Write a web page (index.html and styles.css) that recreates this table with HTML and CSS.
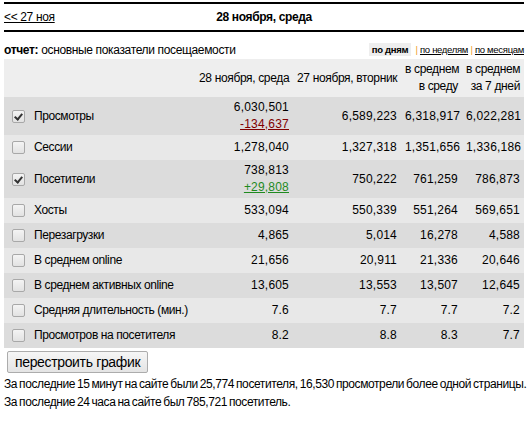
FILE: index.html
```html
<!DOCTYPE html>
<html lang="ru">
<head>
    <meta charset="UTF-8">
    <title>Основные показатели посещаемости</title>
    <link rel="stylesheet" href="styles.css">
</head>
<body>
    <div class="page">
        <div class="daybar">
            <a href="#" class="prev">&lt;&lt; 27 ноя</a>
            <span class="title">28 ноября, среда</span>
            <span class="next"></span>
        </div>

        <div class="report">
            <span><b>отчет:</b> основные показатели посещаемости</span>
            <span class="period">
                <b class="active">по дням</b>
                <span class="sep">|</span>
                <a href="#">по неделям</a>
                <span class="sep">|</span>
                <a href="#">по месяцам</a>
            </span>
        </div>

        <table class="stats">
            <colgroup>
                <col class="c-name">
                <col class="c-today">
                <col class="c-prev">
                <col class="c-wday">
                <col class="c-week">
            </colgroup>
            <tr class="head">
                <td></td>
                <td>28 ноября, среда</td>
                <td>27 ноября, вторник</td>
                <td>в среднем<br>в среду</td>
                <td>в среднем<br>за 7 дней</td>
            </tr>
            <tr class="dark tall">
                <td><label><span class="box checked"></span>Просмотры</label></td>
                <td>6,030,501<br><a href="#" class="down">-134,637</a></td>
                <td>6,589,223</td>
                <td>6,318,917</td>
                <td>6,022,281</td>
            </tr>
            <tr class="light">
                <td><label><span class="box"></span>Сессии</label></td>
                <td>1,278,040</td>
                <td>1,327,318</td>
                <td>1,351,656</td>
                <td>1,336,186</td>
            </tr>
            <tr class="dark tall">
                <td><label><span class="box checked"></span>Посетители</label></td>
                <td>738,813<br><a href="#" class="up">+29,808</a></td>
                <td>750,222</td>
                <td>761,259</td>
                <td>786,873</td>
            </tr>
            <tr class="light">
                <td><label><span class="box"></span>Хосты</label></td>
                <td>533,094</td>
                <td>550,339</td>
                <td>551,264</td>
                <td>569,651</td>
            </tr>
            <tr class="dark">
                <td><label><span class="box"></span>Перезагрузки</label></td>
                <td>4,865</td>
                <td>5,014</td>
                <td>16,278</td>
                <td>4,588</td>
            </tr>
            <tr class="light">
                <td><label><span class="box"></span>В среднем online</label></td>
                <td>21,656</td>
                <td>20,911</td>
                <td>21,336</td>
                <td>20,646</td>
            </tr>
            <tr class="dark">
                <td><label><span class="box"></span>В среднем активных online</label></td>
                <td>13,605</td>
                <td>13,553</td>
                <td>13,507</td>
                <td>12,645</td>
            </tr>
            <tr class="light">
                <td><label><span class="box"></span>Средняя длительность (мин.)</label></td>
                <td>7.6</td>
                <td>7.7</td>
                <td>7.7</td>
                <td>7.2</td>
            </tr>
            <tr class="dark">
                <td><label><span class="box"></span>Просмотров на посетителя</label></td>
                <td>8.2</td>
                <td>8.8</td>
                <td>8.3</td>
                <td>7.7</td>
            </tr>
        </table>

        <button class="rebuild">перестроить график</button>

        <p class="summary">За последние 15 минут на сайте были 25,774 посетителя, 16,530 просмотрели более одной страницы.</p>
        <p class="summary">За последние 24 часа на сайте был 785,721 посетитель.</p>
    </div>
</body>
</html>
```

FILE: styles.css
```css
body {
    margin: 0;
    font-family: "Liberation Sans", Arial, sans-serif;
    font-size: 12px;
    letter-spacing: -0.35px;
    color: #000;
    background: #fff;
}

a {
    color: #000;
}

.page {
    width: 520px;
    padding: 2px 4px;
}

.daybar {
    display: flex;
    align-items: center;
    height: 26px;
    border-top: 2px solid #000;
    border-bottom: 2px solid #000;
}

.prev,
.next {
    width: 70px;
}

.title {
    flex: 1;
    text-align: center;
    font-weight: bold;
}

.report {
    display: flex;
    justify-content: space-between;
    align-items: flex-end;
    margin-top: 10px;
    height: 16px;
    line-height: 16px;
}

.period {
    font-size: 9.5px;
    letter-spacing: -0.3px;
}

.period .active {
    background: #eee;
    padding: 1px 3px;
    margin-right: 2px;
}

.period .sep {
    color: #f0a030;
}

.stats {
    width: 520px;
    margin-top: 1px;
    border-collapse: collapse;
    table-layout: fixed;
}

.c-name { width: 191px; }
.c-today { width: 98px; }
.c-prev { width: 108px; }
.c-wday { width: 61px; }
.c-week { width: 62px; }

.stats td {
    padding: 4px 4px;
    line-height: 17px;
    text-align: right;
    vertical-align: middle;
    white-space: nowrap;
    letter-spacing: 0.2px;
}

.stats .head td {
    background: #eee;
    padding-top: 2px;
    padding-bottom: 2px;
    letter-spacing: -0.35px;
}

.stats td:first-child {
    text-align: left;
    padding-left: 8px;
    letter-spacing: -0.4px;
}

.stats .tall td {
    padding-top: 2px;
    padding-bottom: 2px;
}

.dark td {
    background: #dcdcdc;
}

.light td {
    background: #e8e8e8;
}

.stats label {
    display: flex;
    align-items: center;
    gap: 9px;
}

.box {
    flex-shrink: 0;
    width: 11px;
    height: 11px;
    border: 1px solid #a8a8a8;
    border-radius: 2px;
    background: linear-gradient(#f4f4f4, #e2e2e2);
    position: relative;
}

.box.checked::after {
    content: "";
    position: absolute;
    left: 3px;
    top: 1px;
    width: 3px;
    height: 6px;
    border: solid #333;
    border-width: 0 2px 2px 0;
    transform: rotate(40deg);
}

.down {
    color: #800000;
}

.up {
    color: #1f8a1f;
}

.rebuild {
    margin: 3px 0 0 3px;
    height: 22px;
    padding: 0 7px;
    font-family: "Liberation Sans", Arial, sans-serif;
    font-size: 14px;
    letter-spacing: -0.35px;
    color: #000;
    background: linear-gradient(#f6f6f6, #e4e4e4);
    border: 1px solid #acacac;
    border-radius: 2px;
}

.summary {
    margin: 0;
    line-height: 18px;
    white-space: nowrap;
    letter-spacing: -0.4px;
    word-spacing: -1px;
}

.summary:first-of-type {
    margin-top: 2px;
}
```
